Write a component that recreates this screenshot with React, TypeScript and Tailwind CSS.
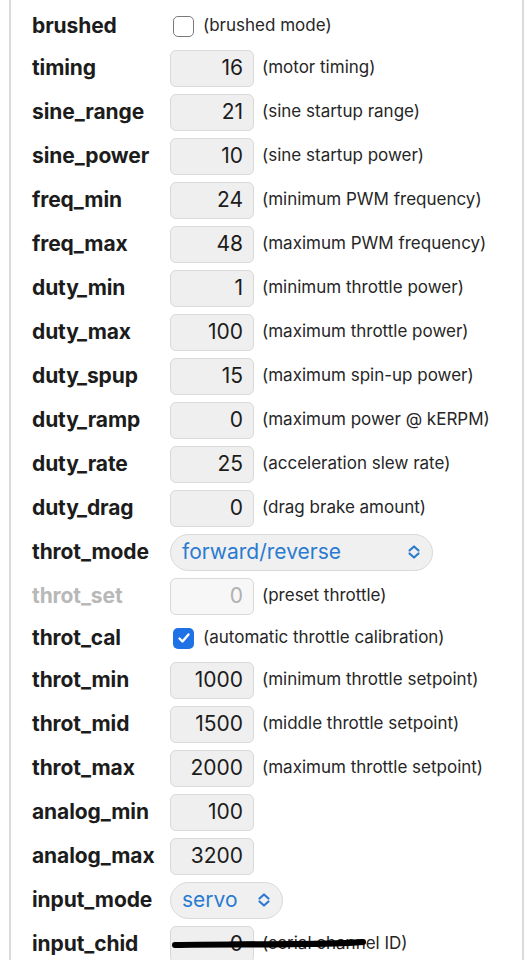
import React from "react";

type Row =
  | { kind: "num"; label: string; value: string; desc?: string; disabled?: boolean; h?: string }
  | { kind: "check"; label: string; checked: boolean; desc: string; h: string }
  | { kind: "select"; label: string; value: string; w: string };

const rows: Row[] = [
  { kind: "check", label: "brushed", checked: false, desc: "(brushed mode)", h: "h-[40px]" },
  { kind: "num", label: "timing", value: "16", desc: "(motor timing)" },
  { kind: "num", label: "sine_range", value: "21", desc: "(sine startup range)" },
  { kind: "num", label: "sine_power", value: "10", desc: "(sine startup power)" },
  { kind: "num", label: "freq_min", value: "24", desc: "(minimum PWM frequency)" },
  { kind: "num", label: "freq_max", value: "48", desc: "(maximum PWM frequency)" },
  { kind: "num", label: "duty_min", value: "1", desc: "(minimum throttle power)" },
  { kind: "num", label: "duty_max", value: "100", desc: "(maximum throttle power)" },
  { kind: "num", label: "duty_spup", value: "15", desc: "(maximum spin-up power)" },
  { kind: "num", label: "duty_ramp", value: "0", desc: "(maximum power @ kERPM)" },
  { kind: "num", label: "duty_rate", value: "25", desc: "(acceleration slew rate)" },
  { kind: "num", label: "duty_drag", value: "0", desc: "(drag brake amount)" },
  { kind: "select", label: "throt_mode", value: "forward/reverse", w: "w-[263px]" },
  { kind: "num", label: "throt_set", value: "0", desc: "(preset throttle)", disabled: true },
  { kind: "check", label: "throt_cal", checked: true, desc: "(automatic throttle calibration)", h: "h-[40px]" },
  { kind: "num", label: "throt_min", value: "1000", desc: "(minimum throttle setpoint)" },
  { kind: "num", label: "throt_mid", value: "1500", desc: "(middle throttle setpoint)" },
  { kind: "num", label: "throt_max", value: "2000", desc: "(maximum throttle setpoint)" },
  { kind: "num", label: "analog_min", value: "100" },
  { kind: "num", label: "analog_max", value: "3200" },
  { kind: "select", label: "input_mode", value: "servo", w: "w-[113px]" },
  { kind: "num", label: "input_chid", value: "0", desc: "(serial channel ID)" },
];

function Chevrons() {
  return (
    <svg width="16" height="16" viewBox="0 0 16 16" fill="none" stroke="#2a7bd0" strokeWidth="2.2" strokeLinecap="round" strokeLinejoin="round">
      <path d="M3.5 6.5 L8 2.5 L12.5 6.5" />
      <path d="M3.5 9.5 L8 13.5 L12.5 9.5" />
    </svg>
  );
}

export default function App() {
  return (
    <div className="w-[532px] h-[960px] bg-white overflow-hidden" style={{ fontFamily: "Inter, 'Noto Sans', sans-serif" }}>
      <div className="ml-[9px] w-[515px] h-full border-l-2 border-r-2 border-[#dadada] pl-[21px] pt-[6px]">
        {rows.map((r, i) => (
          <div key={i} className={`relative flex items-center ${r.kind === "check" ? r.h : "h-[44px]"}`}>
            <div
              className={`w-[138px] shrink-0 whitespace-nowrap text-[21px] font-bold tracking-[-0.1px] ${
                r.kind === "num" && r.disabled ? "text-[#b8b8b8]" : "text-[#1c1c1c]"
              }`}
            >
              {r.label}
            </div>
            {r.kind === "check" && (
              <div className="flex items-center">
                {r.checked ? (
                  <div className="ml-[3px] w-[21px] h-[21px] rounded-[5px] bg-[#1f72e6] flex items-center justify-center">
                    <svg width="14" height="14" viewBox="0 0 14 14" fill="none" stroke="white" strokeWidth="2.4" strokeLinecap="round" strokeLinejoin="round">
                      <path d="M2.5 7.5 L5.5 10.5 L11.5 3.5" />
                    </svg>
                  </div>
                ) : (
                  <div className="ml-[3px] w-[21px] h-[21px] rounded-[5px] border-[1.5px] border-[#7a7a7a] bg-white" />
                )}
                <span className="ml-[9px] text-[17px] text-[#262626]">{r.desc}</span>
              </div>
            )}
            {r.kind === "num" && (
              <div className="flex items-center">
                <div
                  className={`w-[84px] h-[37px] rounded-[6px] border border-[#d9d9d9] flex items-center justify-end pr-[10px] text-[21px] ${
                    r.disabled ? "bg-[#f7f7f7] text-[#b0b0b0]" : "bg-[#efefef] text-[#1c1c1c]"
                  }`}
                >
                  {r.value}
                </div>
                {r.desc && <span className="ml-[8px] text-[17px] text-[#262626]">{r.desc}</span>}
              </div>
            )}
            {r.kind === "select" && (
              <div
                className={`${r.w} h-[37px] rounded-full border border-[#d9d9d9] bg-[#f0f0f0] flex items-center justify-between pl-[11px] pr-[10px] text-[21px] text-[#2a7bd0]`}
              >
                <span>{r.value}</span>
                <Chevrons />
              </div>
            )}
            {r.label === "input_chid" && (
              <svg className="absolute left-[138px] top-[14px]" width="200" height="16" viewBox="0 0 200 16" fill="none">
                <path d="M5 9 C 40 8, 90 9, 130 8 C 160 8, 180 7, 193 6" stroke="#000" strokeWidth="6" strokeLinecap="round" />
                <path d="M60 7 C 100 6, 150 7, 192 5" stroke="#000" strokeWidth="2.5" strokeLinecap="round" />
              </svg>
            )}
          </div>
        ))}
      </div>
    </div>
  );
}
